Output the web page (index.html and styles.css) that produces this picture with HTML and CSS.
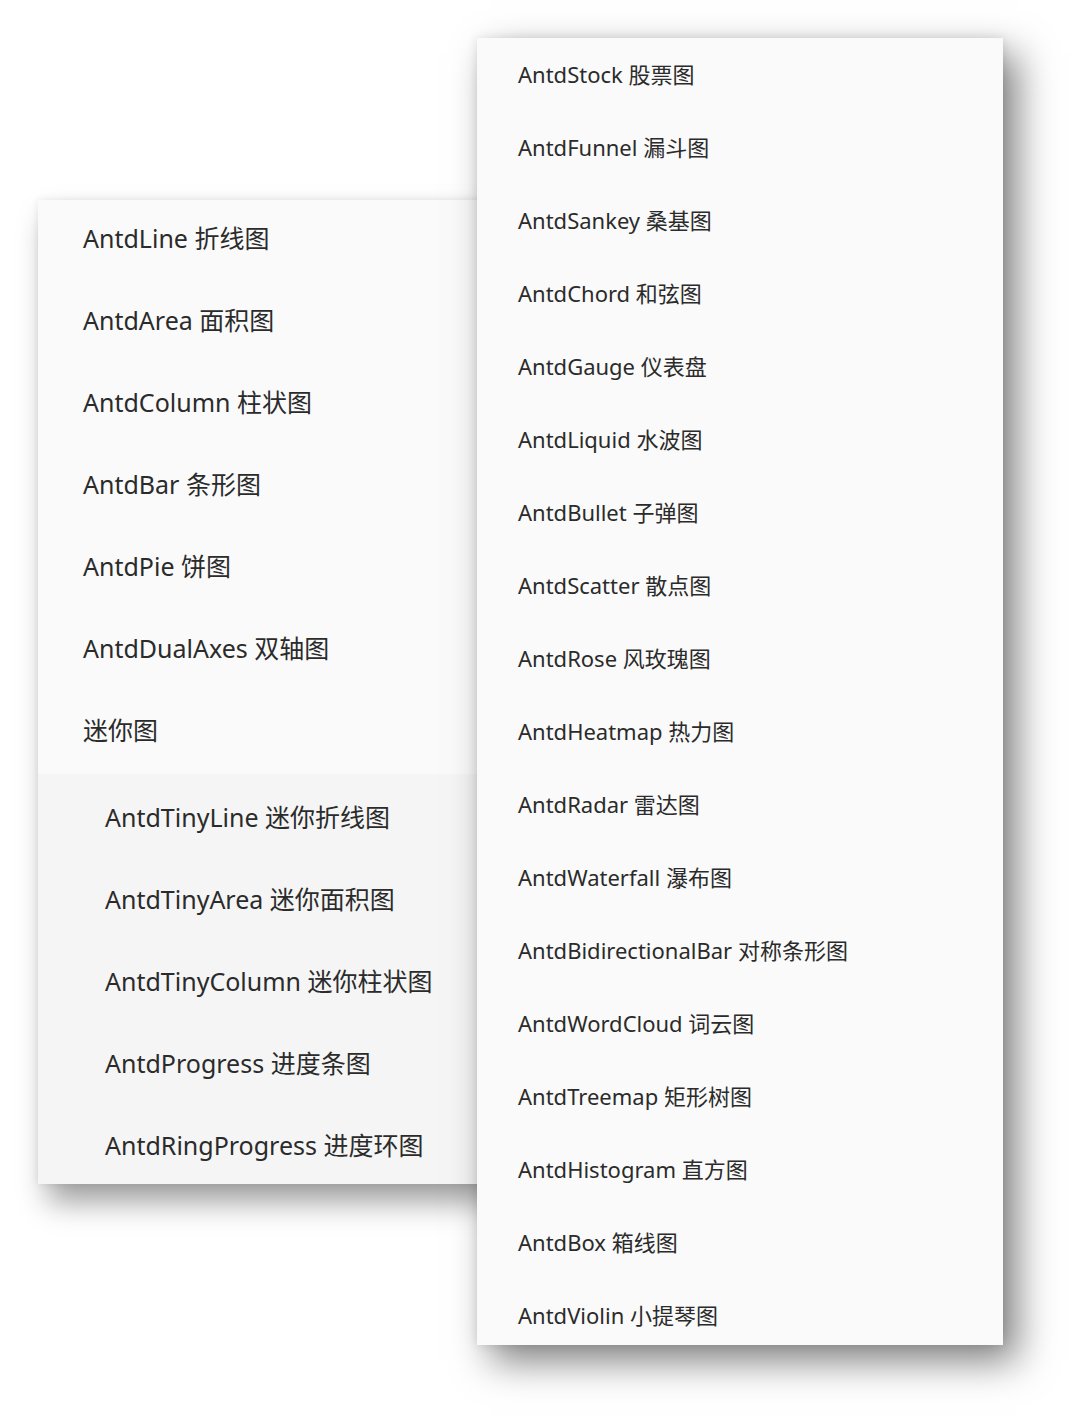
FILE: index.html
```html
<!DOCTYPE html>
<html lang="zh-CN">
<head>
<meta charset="utf-8">
<title>Antd charts menu</title>
<link rel="stylesheet" href="styles.css">
</head>
<body>
<div class="stage">
  <ul class="menu menu-main">
    <li class="item">AntdLine 折线图</li>
    <li class="item">AntdArea 面积图</li>
    <li class="item">AntdColumn 柱状图</li>
    <li class="item">AntdBar 条形图</li>
    <li class="item">AntdPie 饼图</li>
    <li class="item">AntdDualAxes 双轴图</li>
    <li class="item">迷你图</li>
    <li class="sub">
      <ul class="sub-list">
        <li class="item sub-item">AntdTinyLine 迷你折线图</li>
        <li class="item sub-item">AntdTinyArea 迷你面积图</li>
        <li class="item sub-item">AntdTinyColumn 迷你柱状图</li>
        <li class="item sub-item">AntdProgress 进度条图</li>
        <li class="item sub-item">AntdRingProgress 进度环图</li>
      </ul>
    </li>
  </ul>
  <ul class="menu menu-popup">
    <li class="pitem">AntdStock 股票图</li>
    <li class="pitem">AntdFunnel 漏斗图</li>
    <li class="pitem">AntdSankey 桑基图</li>
    <li class="pitem">AntdChord 和弦图</li>
    <li class="pitem">AntdGauge 仪表盘</li>
    <li class="pitem">AntdLiquid 水波图</li>
    <li class="pitem">AntdBullet 子弹图</li>
    <li class="pitem">AntdScatter 散点图</li>
    <li class="pitem">AntdRose 风玫瑰图</li>
    <li class="pitem">AntdHeatmap 热力图</li>
    <li class="pitem">AntdRadar 雷达图</li>
    <li class="pitem">AntdWaterfall 瀑布图</li>
    <li class="pitem">AntdBidirectionalBar 对称条形图</li>
    <li class="pitem">AntdWordCloud 词云图</li>
    <li class="pitem">AntdTreemap 矩形树图</li>
    <li class="pitem">AntdHistogram 直方图</li>
    <li class="pitem">AntdBox 箱线图</li>
    <li class="pitem">AntdViolin 小提琴图</li>
  </ul>
</div>
</body>
</html>
```
FILE: styles.css
```css
html, body {
  margin: 0;
  padding: 0;
  background: #ffffff;
}
body {
  font-family: "Noto Sans", "Noto Sans CJK SC", sans-serif;
  color: #2b2b2b;
}
.stage {
  position: relative;
  width: 1080px;
  height: 1423px;
  overflow: hidden;
}
.menu {
  list-style: none;
  margin: 0;
  padding: 0;
}
.menu-main {
  margin: 200px 0 0 38px;
  width: 450px;
  background: #fafafa;
  box-shadow: 10px 18px 28px rgba(0, 0, 0, 0.38), 0 0 8px rgba(0, 0, 0, 0.08);
}
.item {
  height: 82px;
  display: flex;
  align-items: center;
  padding-left: 45px;
  font-size: 25px;
  line-height: 1;
  padding-bottom: 5px;
  box-sizing: border-box;
}
.sub {
  background: #f5f5f5;
}
.sub-list {
  list-style: none;
  margin: 0;
  padding: 0;
}
.sub-item {
  padding-left: 67px;
  padding-bottom: 0;
  padding-top: 5px;
}
.menu-popup {
  position: absolute;
  left: 477px;
  top: 38px;
  width: 526px;
  height: 1307px;
  overflow: hidden;
  background: #fafafa;
  box-shadow: 14px 16px 36px rgba(0, 0, 0, 0.5), 0 0 10px rgba(0, 0, 0, 0.1);
}
.pitem {
  height: 73px;
  display: flex;
  align-items: center;
  padding-left: 41px;
  font-size: 22px;
  line-height: 1;
  padding-bottom: 1px;
  box-sizing: border-box;
}
```
